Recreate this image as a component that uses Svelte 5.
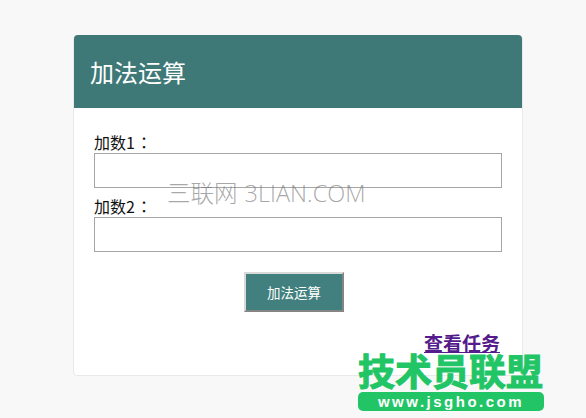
<script lang="ts">
  let first = $state("");
  let second = $state("");
</script>

<main class="page">
  <section class="panel">
    <header class="panel-head">
      <h1>加法运算</h1>
    </header>
    <form class="panel-body">
      <label for="first">加数1<span class="colon">：</span></label>
      <input id="first" type="text" bind:value={first} />
      <label for="second">加数2<span class="colon">：</span></label>
      <input id="second" type="text" bind:value={second} />
      <div class="actions">
        <button type="button">加法运算</button>
      </div>
      <div class="links">
        <a href="#tasks">查看任务</a>
      </div>
    </form>
  </section>

  <div class="watermark">三联网 3LIAN.COM</div>

  <div class="logo">
    <div class="logo-title">技术员联盟</div>
    <div class="logo-url">www.jsgho.com</div>
  </div>
</main>

<style>
  :global(body) {
    margin: 0;
    background: #f8f8f8;
    font-family: "Noto Sans CJK SC", "Liberation Sans", sans-serif;
  }

  .page {
    position: relative;
    width: 586px;
    height: 418px;
    overflow: hidden;
    padding: 35px 0 0 73px;
    box-sizing: border-box;
  }

  .panel {
    width: 450px;
    height: 341px;
    box-sizing: border-box;
    background: #fff;
    border: 1px solid #e9e9e9;
    border-radius: 4px;
  }

  .panel-head {
    height: 73px;
    margin-top: -1px;
    background: #3e7977;
    border-radius: 4px 4px 0 0;
    display: flex;
    align-items: center;
    padding-left: 16px;
  }

  h1 {
    margin: 0;
    font-size: 24px;
    font-weight: 400;
    line-height: 1;
    color: #fff;
  }

  .panel-body {
    display: flex;
    flex-direction: column;
    padding: 26px 20px 0;
  }

  label {
    font-size: 16px;
    line-height: 17px;
    height: 19px;
    color: #111;
  }

  .colon {
    font-family: "Noto Sans CJK TC", sans-serif;
    margin-left: 1px;
  }

  input {
    height: 35px;
    box-sizing: border-box;
    border: 1px solid #a6a6a6;
    background: #fff;
    margin-bottom: 10px;
    padding: 0 4px;
    outline: none;
  }

  .actions {
    display: flex;
    justify-content: center;
    margin-top: 10px;
    padding-right: 8px;
  }

  button {
    width: 100px;
    height: 40px;
    box-sizing: border-box;
    border: 2px solid;
    border-color: #d9d9d9 #858585 #858585 #d9d9d9;
    background: #41807e;
    color: #fff;
    font-family: inherit;
    font-size: 13.5px;
  }

  .links {
    display: flex;
    justify-content: flex-end;
    margin-top: 19px;
    padding-right: 2px;
  }

  a {
    font-size: 19px;
    line-height: 24px;
    color: #551a8b;
    font-weight: 700;
  }

  .watermark {
    position: absolute;
    left: 167px;
    top: 179px;
    font-family: "Open Sans", "Noto Sans CJK SC", sans-serif;
    font-size: 23.5px;
    line-height: 28px;
    font-weight: 300;
    word-spacing: 1px;
    color: rgba(110, 110, 110, 0.6);
    white-space: nowrap;
  }

  .logo {
    position: absolute;
    left: 358px;
    top: 351px;
    width: 186px;
  }

  .logo-title {
    font-size: 37px;
    line-height: 38px;
    font-weight: 700;
    color: #22c566;
    white-space: nowrap;
    -webkit-text-stroke: 1px #22c566;
  }

  .logo-url {
    margin-top: 3px;
    height: 19px;
    background: #22c566;
    border-radius: 5px;
    color: #fff;
    font-size: 15px;
    line-height: 19px;
    font-weight: 700;
    letter-spacing: 2.5px;
    text-align: center;
    font-family: "Liberation Sans", sans-serif;
  }
</style>
